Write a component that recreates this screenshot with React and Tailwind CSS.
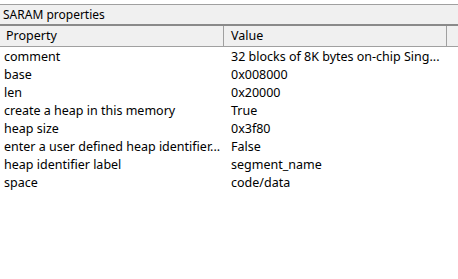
export default function App() {
  const rows = [
    ['comment', '32 blocks of 8K bytes on-chip Sing...'],
    ['base', '0x008000'],
    ['len', '0x20000'],
    ['create a heap in this memory', 'True'],
    ['heap size', '0x3f80'],
    ['enter a user defined heap identifier...', 'False'],
    ['heap identifier label', 'segment_name'],
    ['space', 'code/data'],
  ]

  return (
    <div className="w-[458px] h-[279px] bg-white overflow-hidden text-[12px] text-black" style={{ fontFamily: '"Noto Sans", sans-serif' }}>
      <div className="h-[4px]" />
      {/* title bar */}
      <div className="h-[22px] bg-[#f0f0f0] border-t border-[#a0a0a0] border-b-2 border-b-[#8a8a8a] flex items-center pl-[3px] leading-none">
        SARAM properties
      </div>
      {/* header */}
      <div className="h-[21px] bg-[#f0f0f0] border-b border-[#a0a0a0] flex text-[12.5px] leading-none">
        <div className="w-[224px] border-r border-[#a0a0a0] flex items-center pl-[6px]">Property</div>
        <div className="w-[223px] border-r border-[#a0a0a0] flex items-center pl-[7px]">Value</div>
        <div className="flex-1" />
      </div>
      {/* rows */}
      <div className="text-[12.5px] pt-[1px]">
        {rows.map(([k, v], i) => (
          <div key={i} className="h-[18px] flex items-center leading-none">
            <div className="w-[224px] pl-[4px] whitespace-nowrap">{k}</div>
            <div className="pl-[7px] whitespace-nowrap">{v}</div>
          </div>
        ))}
      </div>
    </div>
  )
}
